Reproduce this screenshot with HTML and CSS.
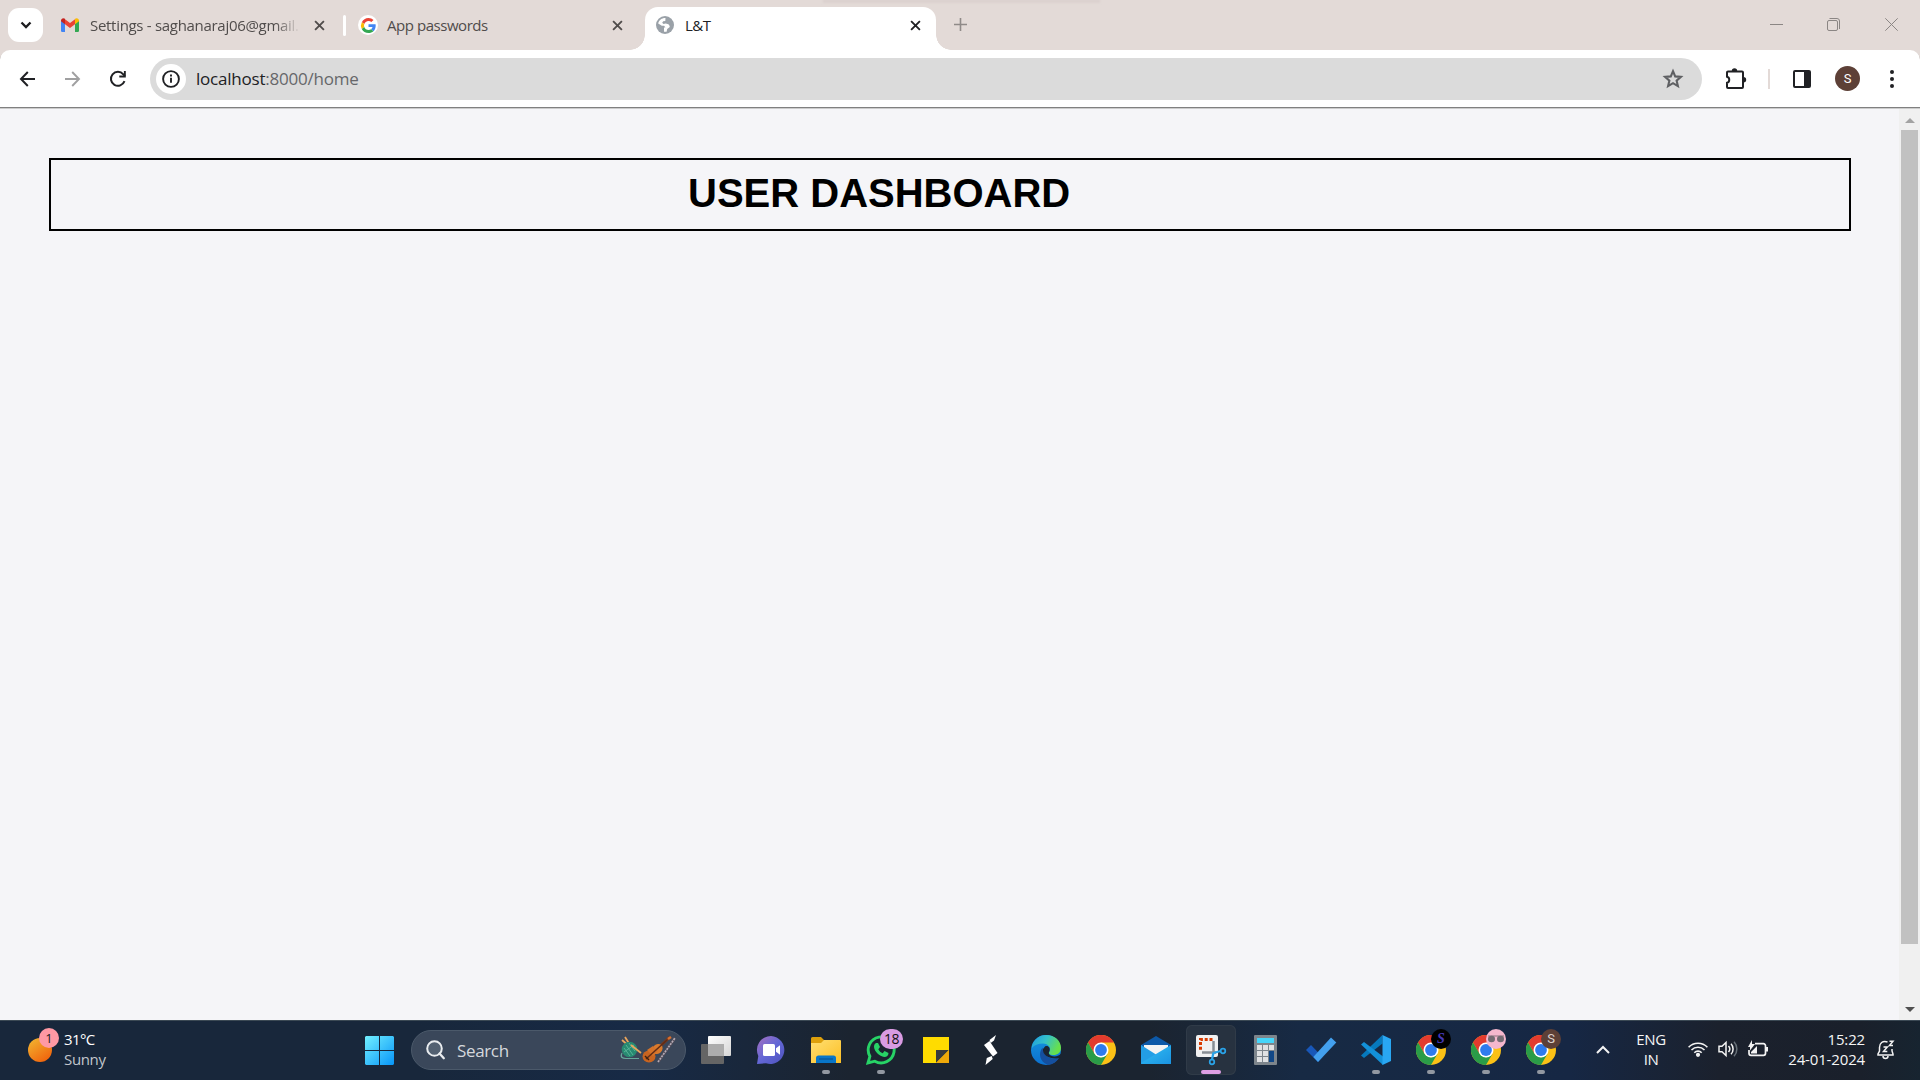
FILE: index.html
```html
<!DOCTYPE html>
<html lang="en">
<head>
<meta charset="utf-8">
<title>L&amp;T</title>
<link rel="stylesheet" href="styles.css">
</head>
<body>
<svg class="defs" width="0" height="0" aria-hidden="true">
  <defs>
    <symbol id="chrome" viewBox="0 0 30 30">
      <circle cx="15" cy="15" r="15" fill="#fbc116"/>
      <path d="M2 7.5A15 15 0 0 1 28 7.5H15L8.5 18.700z" fill="#e33b2e"/>
      <path d="M2 7.500A15 15 0 0 0 15 30L21.500 18.750 15 22.500 8.500 18.750z" fill="#2a9c48"/>
      <circle cx="15" cy="15" r="7.500" fill="#fff"/>
      <circle cx="15" cy="15" r="5.900" fill="#2f7bed"/>
    </symbol>
    <symbol id="x" viewBox="0 0 10 10"><path d="M1 1l8 8M9 1L1 9" fill="none" stroke="currentColor" stroke-width="1.700"/></symbol>
    <linearGradient id="win" x2="1" y2="1"><stop stop-color="#72f0ff"/><stop offset="1" stop-color="#0795f8"/></linearGradient>
    <linearGradient id="sun" x2=".7" y2="1"><stop stop-color="#f2b932"/><stop offset="1" stop-color="#f0640d"/></linearGradient>
    <linearGradient id="tv" x2="1" y2="1"><stop stop-color="#fff"/><stop offset="1" stop-color="#d6d6d6"/></linearGradient>
    <linearGradient id="chat" x2="1" y2="1"><stop stop-color="#a770c0"/><stop offset=".5" stop-color="#6367d6"/><stop offset="1" stop-color="#4d52bd"/></linearGradient>
    <linearGradient id="folder" x2="1" y2="1"><stop stop-color="#ffdf72"/><stop offset="1" stop-color="#fcbf25"/></linearGradient>
    <linearGradient id="edge1" x2="1" y2=".4"><stop stop-color="#1d9be3"/><stop offset=".5" stop-color="#35c1c9"/><stop offset="1" stop-color="#67e04c"/></linearGradient>
    <linearGradient id="edge2" x2="0" y2="1"><stop stop-color="#1595df"/><stop offset="1" stop-color="#0c70cf"/></linearGradient>
    <linearGradient id="mail" x2="1" y2="1"><stop stop-color="#32c1f4"/><stop offset="1" stop-color="#1b93e2"/></linearGradient>
  </defs>
</svg>

<header class="tabstrip">
  <button class="tab-search"><svg width="12" height="8" viewBox="0 0 12 8"><path d="M1.500 1.500L6 6l4.500-4.500" fill="none" stroke="#1d1d1f" stroke-width="2.300"/></svg></button>
  <div class="tab tab-mail">
    <svg width="18" height="14" viewBox="0 0 18 14"><path d="M0 2.500l4 3V14H1.200A1.200 1.200 0 0 1 0 12.800z" fill="#4285f4"/><path d="M14 5.500l4-3v10.300a1.200 1.200 0 0 1-1.200 1.200H14z" fill="#34a853"/><path d="M4 1.300l5 3.700 5-3.700v4.900L9 10 4 6.200z" fill="#ea4335"/><path d="M0 2.500C0 .3 2.400-.6 4 .8v5.400L0 3.200z" fill="#c5221f"/><path d="M18 2.500C18 .3 15.600-.6 14 .8v5.400l4-3z" fill="#fbbc04"/></svg>
    <span class="tab-title">Settings - saghanaraj06@gmail.</span>
    <svg class="tab-close" width="11" height="11"><use href="#x"/></svg>
  </div>
  <div class="tab-divider"></div>
  <div class="tab tab-google">
    <span class="google-badge"><svg width="15" height="15" viewBox="0 0 48 48"><path fill="#ea4335" d="M24 9.500c3.500 0 6.700 1.200 9.200 3.600l6.900-6.900C35.900 2.400 30.500 0 24 0 14.600 0 6.500 5.400 2.600 13.200l8 6.200C12.400 13.700 17.700 9.500 24 9.500z"/><path fill="#4285f4" d="M47 24.600c0-1.600-.2-3.100-.4-4.600H24v9h12.900c-.6 3-2.300 5.500-4.800 7.200l7.700 6C44.400 38 47 31.800 47 24.600z"/><path fill="#fbbc05" d="M10.500 28.600a14 14 0 0 1 0-9.200l-8-6.200a24 24 0 0 0 0 21.600z"/><path fill="#34a853" d="M24 48c6.500 0 11.900-2.100 15.900-5.800l-7.700-6c-2.200 1.500-4.900 2.300-8.200 2.300-6.300 0-11.600-4.200-13.500-9.900l-8 6.200C6.500 42.600 14.600 48 24 48z"/></svg></span>
    <span class="tab-title">App passwords</span>
    <svg class="tab-close" width="11" height="11"><use href="#x"/></svg>
  </div>
  <div class="tab tab-active">
    <svg width="18" height="18" viewBox="0 0 18 18"><circle cx="9" cy="9" r="9" fill="#9aa1a8"/><path d="M9.500 2.100C5.800 2 3 4.200 2.200 7.500l3.600 2.300h2.300l1.300 1.700H8v4.200c.8.200 1.800.2 2.600 0l.6-2.600 2.600-2.200c-.2-1.500-1-2.500-2.300-2.800L9.800 7.600 7.500 7.900 6.200 6.800l1-1.600 2.100-.3z" fill="#fff"/><path d="M2.300 10.700l3.600 2-.5 1.900A7.200 7.200 0 0 1 2.300 10.700z" fill="#9aa1a8"/></svg>
    <span class="tab-title">L&amp;T</span>
    <svg class="tab-close" width="11" height="11"><use href="#x"/></svg>
  </div>
  <svg class="new-tab" width="13" height="13" viewBox="0 0 13 13"><path d="M6.500 0v13M0 6.500h13" stroke="#8f8a88" stroke-width="1.600"/></svg>
  <div class="window-buttons">
    <svg width="13" height="13" viewBox="0 0 13 13"><path d="M0 6.500h13" stroke="#8b8684"/></svg>
    <svg width="13" height="13" viewBox="0 0 13 13" fill="none" stroke="#8b8684"><rect x=".5" y="2.500" width="10" height="10" rx="1.500"/><path d="M2.500.5H10A2.500 2.500 0 0 1 12.500 3v8"/></svg>
    <svg width="13" height="13" viewBox="0 0 13 13"><path d="M.3.300l12.400 12.400M12.700.3L.3 12.700" stroke="#8b8684"/></svg>
  </div>
  <div class="top-shadow"></div>
</header>

<nav class="toolbar">
  <svg width="16" height="16" viewBox="0 0 16 16" fill="none" stroke="#202124" stroke-width="2"><path d="M15 8H1.500M7.800 1L1 8l6.800 7"/></svg>
  <svg width="16" height="16" viewBox="0 0 16 16" fill="none" stroke="#a0a0a1" stroke-width="1.900"><path d="M0 8h14M7.200 1L14 8l-6.800 7"/></svg>
  <svg width="16" height="16" viewBox="0 0 16 16"><path d="M14.500 10.200A7 7 0 1 1 13.300 3.300L15 5" fill="none" stroke="#202124" stroke-width="2"/><path d="M15.800 0v6.500H9.300V4.600h4.600V0z" fill="#202124"/></svg>
  <div class="omnibox">
    <span class="site-info"><svg width="18" height="18" viewBox="0 0 18 18"><circle cx="9" cy="9" r="7.900" fill="none" stroke="#202124" stroke-width="1.900"/><path d="M9 7.800v5M9 4.600v2" stroke="#202124" stroke-width="1.900"/></svg></span>
    <span class="url"><b>localhost</b>:8000/home</span>
    <svg class="star" width="20" height="19" viewBox="0 0 20 19"><path d="M10 2.200l2.200 5.200 5.700.5-4.300 3.700 1.300 5.500L10 14.200l-4.900 2.900 1.300-5.500L2.100 7.900l5.700-.5z" fill="none" stroke="#5f6063" stroke-width="2.100"/></svg>
  </div>
  <svg class="puzzle" width="22" height="22" viewBox="0 0 22 22"><path d="M3 3.500h14a1 1 0 0 1 1 1V19a1 1 0 0 1-1 1H3a1 1 0 0 1-1-1v-4.200c3-.5 3-5.600 0-6.100V4.500a1 1 0 0 1 1-1z" fill="none" stroke="#202124" stroke-width="2"/><path d="M6.800 3a2.700 2.700 0 0 1 5.400 0zM18.500 9a2.700 2.700 0 0 1 0 5.400z" fill="#202124"/></svg>
  <div class="toolbar-divider"></div>
  <svg class="panel" width="18" height="18" viewBox="0 0 18 18"><rect x="1" y="1" width="16" height="16" rx="1" fill="none" stroke="#202124" stroke-width="2"/><path d="M11 1h6v16h-6z" fill="#202124"/></svg>
  <span class="avatar">S</span>
  <svg class="menu" width="4" height="18" viewBox="0 0 4 18" fill="#202124"><circle cx="2" cy="2" r="2"/><circle cx="2" cy="9" r="2"/><circle cx="2" cy="16" r="2"/></svg>
</nav>

<div class="viewport">
  <main class="page"><h1 class="banner">USER DASHBOARD</h1></main>
  <div class="scrollbar">
    <svg width="10" height="5" viewBox="0 0 10 5"><path d="M0 5l5-5 5 5z" fill="#a3a3a3"/></svg>
    <div class="thumb"></div>
    <svg class="down" width="10" height="5" viewBox="0 0 10 5"><path d="M0 0l5 5 5-5z" fill="#505050"/></svg>
  </div>
</div>

<footer class="taskbar">
  <div class="weather">
    <span class="sun"><svg width="24" height="24" viewBox="0 0 24 24"><circle cx="12" cy="12" r="12" fill="url(#sun)"/></svg><span class="sun-badge">1</span></span>
    <div class="weather-text"><span>31°C</span><span class="muted">Sunny</span></div>
  </div>
  <svg class="start" width="29" height="29" viewBox="0 0 29 29"><path d="M1 0h13v14H0V1zM15 0h13l1 1v13H15zM0 15h14v14H1l-1-1zM15 15h14v13l-1 1H15z" fill="url(#win)"/></svg>
  <div class="search">
    <svg width="19" height="20" viewBox="0 0 19 20" fill="none" stroke="#e9ecef"><circle cx="8.500" cy="8.500" r="7.300" stroke-width="2" fill="#526071"/><path d="M13.500 13.500l4.300 4.700" stroke-width="2.300" stroke-linecap="round"/></svg>
    <span>Search</span>
    <svg class="art" width="56" height="28" viewBox="0 0 56 28"><path d="M4 1l5 8M1 4l8 7" stroke="#e9a55c" stroke-width="1.800"/><path d="M1 17c-2 4 0 5.500 4 5.500h13" fill="none" stroke="#67a89b" stroke-width="1.200"/><circle cx="8.500" cy="13.500" r="7.800" fill="#288a71"/><path d="M3 12l6 8M5 9l7 10M8 7l6 8M3 16l10-7" stroke="#5cb79c" stroke-width=".9"/><path d="M10 9l10 8" stroke="#e9a55c" stroke-width="1.800"/><path d="M35 14L49 1" stroke="#7b3a1c" stroke-width="2.600"/><path d="M47 3l3-2" stroke="#d7702f" stroke-width="2.500"/><ellipse cx="36.500" cy="13" rx="5.500" ry="4.700" transform="rotate(-45 36.500 13)" fill="#d97a2c"/><ellipse cx="28" cy="20.500" rx="6.500" ry="6" fill="#c86420"/><path d="M26 14l6 6 5-5-5-5z" fill="#d5732a"/><path d="M25 23L46 4" stroke="#5f2c17" stroke-width="1.500"/><path d="M24 20l4 4" stroke="#41200f" stroke-width="1.500"/><path d="M37 26L54 2" stroke="#554e59" stroke-width="3"/><path d="M37 26L54 2" stroke="#b5adb8" stroke-width="1.600" stroke-dasharray="2 1"/></svg>
  </div>
  <div class="apps">
    <div class="app"><svg width="30" height="30" viewBox="0 0 30 30"><rect x="7" y="1" width="23" height="20" rx="1" fill="url(#tv)"/><rect y="9" width="23" height="20" rx="1" fill="#656565"/><path d="M7 9h16v12H7z" fill="#adadad"/></svg></div>
    <div class="app"><svg width="30" height="30" viewBox="0 0 30 30"><path d="M15 1a14 14 0 1 1-5 27.300L1 29l1.300-8A14 14 0 0 1 15 1z" fill="url(#chat)"/><rect x="7" y="9" width="12" height="12" rx="1.500" fill="#fff"/><path d="M20 13.300l4-3v9.400l-4-3z" fill="#fff"/></svg></div>
    <div class="app running"><svg width="30" height="30" viewBox="0 0 30 30"><path d="M0 3.500A1.500 1.500 0 0 1 1.500 2H10l3 3v4H0z" fill="#dda00c"/><path d="M0 8h10l3-3h16a1 1 0 0 1 1 1v22H0z" fill="url(#folder)"/><path d="M5 28v-5a2.500 2.500 0 0 1 2.500-2.500h15A2.500 2.500 0 0 1 25 23v5z" fill="#0876c9"/><path d="M8 24h14" stroke="#064d8c"/></svg></div>
    <div class="app running"><svg width="30" height="30" viewBox="0 0 30 30"><path d="M2 28l1.900-6.700A13 13 0 1 1 8.800 26.200z" fill="none" stroke="#27d366" stroke-width="2.900"/><path d="M10 8h2l2 4-1.700 2.200c1 2 2.300 3.200 4.400 4L18.500 16l4 2c0 3-2 4-4.300 3.900C13.500 21.500 8.500 16.500 8 12c0-2 .7-3.200 2-4z" fill="#27d366"/></svg><span class="badge count">18</span></div>
    <div class="app"><svg width="30" height="30" viewBox="0 0 30 30"><path d="M2 2h26v26H2z" fill="#ffdc00"/><path d="M15 28V15h13z" fill="#383b3c"/><path d="M15 28l13-13v13z" fill="#efa90a"/></svg></div>
    <div class="app"><svg width="30" height="30" viewBox="0 0 30 30" fill="#fff"><path d="M8 10l5.500-4L21.500 18l-4.500 3.500z"/><path d="M20 0l-6.500 5 1.200 3L18 5.500zM9.500 30l7.200-6-1-3-4.900 2z"/></svg></div>
    <div class="app"><svg width="30" height="30" viewBox="0 0 30 30"><circle cx="15" cy="15" r="15" fill="url(#edge2)"/><path d="M1 11C3 4 8.500 0 15 0c9 0 15 6 15 12.700C30 17.500 26.500 20 22.500 20c-4 0-5.200-1.700-4.200-3 2.500-4-1-8.500-6.300-8.500C7 8.500 3 10 1 13z" fill="url(#edge1)"/><path d="M11.500 12.500C7 18 8.500 27 17 29.800c5-.1 8.500-3 10.800-6.800-7 2.500-15-1-16.300-10.500z" fill="#154f9e"/><path d="M14 11.500c3-1.500 5.700 1.500 4.500 4.500-1.700 2.300-.2 5.200 5 5.400 2.500 0 4.500-1 6.500-2.700v4l-2.200.3C21 25 11 21 12 14z" fill="#1b2430"/></svg></div>
    <div class="app"><svg width="30" height="30"><use href="#chrome"/></svg></div>
    <div class="app"><svg width="30" height="30" viewBox="0 0 30 30"><path d="M0 10L15 1l15 9v10H0z" fill="#0d59a8"/><path d="M3 10h24v10H3z" fill="#f3f3f3"/><path d="M0 10l30 19H0z" fill="#239ee6"/><path d="M30 10v19H2l-2-1z" fill="url(#mail)"/></svg></div>
    <div class="app active"><svg width="30" height="30" viewBox="0 0 30 30"><rect width="22" height="22" rx="2" fill="#f1f1f1"/><path d="M16.500 4.500h-12v12" fill="none" stroke="#d83b01" stroke-width="3" stroke-dasharray="3 1.800"/><path d="M17.500 6v12M6 17.500h14" stroke="#898e94" stroke-width="2.500"/><path d="M17.500 17.500l-1.500 7M17.500 18l7-2" stroke="#2aa3e8" stroke-width="2.300"/><circle cx="16" cy="27" r="2.300" fill="none" stroke="#2aa3e8" stroke-width="1.700"/><circle cx="27" cy="16" r="2.300" fill="none" stroke="#2aa3e8" stroke-width="1.700"/></svg></div>
    <div class="app"><svg width="30" height="30" viewBox="0 0 30 30"><rect x="3" width="23" height="30" rx="1" fill="#7d858c"/><path d="M6 3h17v5H6z" fill="#45d5fa"/><path d="M6 10h5v5H6zM12 10h5v5h-5zM18 10h5v5h-5zM6 16h5v5H6zM12 16h5v5h-5zM6 22h5v5H6zM12 22h5v5h-5z" fill="#e0e1e3"/><path d="M18 16h5v11h-5z" fill="#114786"/></svg></div>
    <div class="app"><svg width="30" height="30" viewBox="0 0 30 30"><path d="M0 15l5-5 11.500 12L12 27z" fill="#1857b8"/><path d="M7.300 22L25 2.500l5.300 5L12 27z" fill="#43a0ee"/></svg></div>
    <div class="app running"><svg width="30" height="30" viewBox="0 0 30 30"><path d="M0 20.500L21.500 0v8.500L3 23z" fill="#0679bd"/><path d="M0 9.500l3-2.500 19 14.500V30z" fill="#1391d9"/><path d="M21.500 0L30 4v22l-8.500 4z" fill="#29a7f3"/></svg></div>
    <div class="app running"><svg width="30" height="30"><use href="#chrome"/></svg><span class="badge profile-ink">S</span></div>
    <div class="app running"><svg width="30" height="30"><use href="#chrome"/></svg><span class="badge profile-pink"><svg width="20" height="20" viewBox="0 0 20 20"><path d="M2 7h16" stroke="#ad8997" stroke-width="1.500"/><ellipse cx="5.500" cy="10" rx="3.500" ry="3.200" fill="#746b73"/><ellipse cx="14.500" cy="10" rx="3.500" ry="3.200" fill="#746b73"/></svg></span></div>
    <div class="app running"><svg width="30" height="30"><use href="#chrome"/></svg><span class="badge profile-brown">S</span></div>
  </div>
  <div class="tray">
    <svg class="chevron" width="14" height="8" viewBox="0 0 14 8"><path d="M1 7l6-6 6 6" fill="none" stroke="#f3f3f3" stroke-width="2"/></svg>
    <div class="language"><span>ENG</span><span>IN</span></div>
    <div class="status">
      <svg width="20" height="16" viewBox="0 0 20 16" fill="none" stroke="#f3f3f3" stroke-width="1.600"><path d="M.6 6.200a13 13 0 0 1 18.800 0M3.500 9a9.200 9.200 0 0 1 13 0M6.300 11.700a5.200 5.200 0 0 1 7.400 0"/><circle cx="10" cy="13.800" r="1.300" fill="#f3f3f3"/></svg>
      <svg width="20" height="16" viewBox="0 0 20 16" fill="none" stroke="#f3f3f3" stroke-width="1.500"><path d="M1 5.200h3L8 1.500v13l-4-3.700H1z"/><path d="M10.500 5a4.500 4.500 0 0 1 0 6M13 2.800a7.500 7.500 0 0 1 0 10.400"/><path d="M16 .8a10.500 10.500 0 0 1 0 14.400" stroke="#677078"/></svg>
      <svg width="20" height="16" viewBox="0 0 20 16"><path d="M7 2.700h8.500a2 2 0 0 1 2 2v7.600a2 2 0 0 1-2 2H3a2 2 0 0 1-2-2V9" fill="none" stroke="#f3f3f3" stroke-width="1.700"/><path d="M18 6h2v4.500h-2zM3 12.500V11l6-6v7.500zM4-1v4h3L2 9.500V6H0z" fill="#f3f3f3"/></svg>
    </div>
    <div class="clock"><span>15:22</span><span>24-01-2024</span></div>
    <svg class="bell" width="18" height="19" viewBox="0 0 18 19" fill="none" stroke="#f3f3f3" stroke-width="1.500"><path d="M10.500 2C5.500.500 2.500 3 2.500 7.500V11L1 14v1h15v-1l-1-3V9M6 16a2.500 2.500 0 0 0 5 0"/><path d="M6.500 7h3.800l-3.800 4.500h3.800M12.500 1.200H16l-3.500 4.300H16"/></svg>
  </div>
</footer>
</body>
</html>
```
FILE: styles.css
```css
* { box-sizing: border-box; }
body {
  margin: 0;
  width: 1920px;
  height: 1080px;
  overflow: hidden;
  display: flex;
  flex-direction: column;
  background: #e3dad7;
  font-family: "Open Sans", "Noto Sans", sans-serif;
}
svg { display: block; flex: none; overflow: visible; }
.defs { position: absolute; }

/* Tab strip */
.tabstrip { height: 50px; flex: none; display: flex; position: relative; background: #e3dad7; }
.tab-search {
  width: 35px; height: 34px; margin: 8px 0 0 8px; padding: 0;
  border: 0; border-radius: 11px; background: #fff;
  display: flex; align-items: center; justify-content: center;
}
.tab { display: flex; align-items: center; height: 50px; color: #504c4b; }
.tab-title { font-size: 15px; line-height: 20px; white-space: nowrap; }
.tab-close { margin-left: auto; }
.tab-mail { width: 264px; margin-left: 18px; }
.tab-mail .tab-title {
  width: 210px; margin-left: 11px; overflow: hidden; letter-spacing: -.3px;
  -webkit-mask-image: linear-gradient(90deg, #000 185px, transparent 210px);
  mask-image: linear-gradient(90deg, #000 185px, transparent 210px);
}
.tab-divider { width: 3px; height: 21px; margin: 15px 0 0 18px; border-radius: 2px; background: #fff; }
.tab-google { width: 265px; margin-left: 12px; }
.tab-google .tab-title { margin-left: 9px; letter-spacing: -.45px; }
.google-badge { width: 20px; height: 20px; border-radius: 50%; background: #fff; display: grid; place-items: center; }
.tab-active {
  position: relative; width: 291px; height: 43px; margin: 7px 0 0 22px;
  padding: 0 15px 7px 11px; border-radius: 13px 13px 0 0; background: #fff; color: #202124;
}
.tab-active .tab-title { margin-left: 11px; letter-spacing: -.5px; }
.tab-active::before, .tab-active::after { content: ""; position: absolute; bottom: 0; width: 15px; height: 15px; }
.tab-active::before { left: -15px; background: radial-gradient(circle at 0 0, transparent 14.5px, #fff 15px); }
.tab-active::after { right: -15px; background: radial-gradient(circle at 100% 0, transparent 14.5px, #fff 15px); }
.new-tab { margin: 18px 0 0 18px; }
.window-buttons { display: flex; gap: 44px; margin: 18px 22px 0 auto; }
.window-buttons svg:nth-child(2) { margin-right: 1px; }
.top-shadow { position: absolute; left: 823px; top: 0; width: 277px; height: 3px; background: linear-gradient(#d3c9c7, #e0d6d3); filter: blur(1px); }

/* Toolbar */
.toolbar {
  height: 59px; flex: none; display: flex; align-items: center;
  padding: 0 26px 1px 20px; background: #fff; border-radius: 10px 10px 0 0;
  border-bottom: 1px solid #ccc; box-shadow: inset 0 -1px #808080;
}
.toolbar > svg:nth-child(2) { margin-left: 29px; }
.toolbar > svg:nth-child(3) { margin-left: 29px; }
.omnibox { width: 1552px; height: 42px; margin-left: 24px; padding: 0 19px 0 6px; border-radius: 21px; background: #dbdbdb; display: flex; align-items: center; }
.site-info { width: 30px; height: 30px; border-radius: 50%; background: #fff; display: grid; place-items: center; }
.url { margin-left: 10px; padding-top: 1px; font-size: 17px; line-height: 24px; color: #66676a; letter-spacing: -.22px; }
.url b { font-weight: 400; color: #202124; }
.star { margin-left: auto; }
.toolbar .puzzle { margin-left: 23px; }
.toolbar-divider { width: 2px; height: 20px; margin-left: 21px; background: #e3dad7; }
.panel { margin-left: 23px; }
.avatar { width: 25px; height: 25px; margin-left: 24px; border-radius: 50%; background: #5d4037; color: #fff; font: 13px/25px Roboto, sans-serif; text-align: center; }
.menu { margin-left: auto; }

/* Page */
.viewport { flex: 1; display: flex; background: #f5f5f8; }
.page { flex: 1; padding: 49px 48px 0 49px; }
.banner {
  margin: 0; height: 73px; padding-left: 637px; border: 2px solid #000;
  font: bold 40px/67px "Liberation Sans", Arial, sans-serif; color: #000;
}
.scrollbar { width: 21px; padding: 9px 0 8px; background: #f0f0f0; display: flex; flex-direction: column; align-items: center; }
.thumb { width: 17px; height: 814px; margin-top: 7px; background: #c1c1c1; }
.scrollbar .down { margin-top: auto; }

/* Taskbar */
.taskbar {
  height: 60px; flex: none; display: flex; align-items: center; padding-bottom: 1px; border-top: 1px solid #3b4954;
  background: linear-gradient(90deg, #18273b 0, #18273b 420px, #172a46 640px, #1b2430 850px, #1b2430 1150px, #172a44 1300px, #162744 1570px, #1b212d 1720px, #1a202b 1860px, #172430 1920px);
  color: #fff;
}
.weather { display: flex; width: 337px; margin-left: 28px; align-items: center; }
.sun { position: relative; }
.sun-badge { position: absolute; left: 11px; top: -10px; width: 20px; height: 20px; border-radius: 50%; background: #ff99a4; color: #1d1d1d; font-size: 13px; line-height: 20px; text-align: center; }
.weather-text { margin-left: 12px; padding-bottom: 3px; display: flex; flex-direction: column; font-size: 15px; line-height: 20px; letter-spacing: -.6px; }
.muted { color: #c2c6cc; letter-spacing: -.35px; }
.search { width: 275px; height: 40px; margin-left: 17px; padding: 0 8px 0 14px; border: 1px solid #4b596a; border-radius: 20px; background: #3a475a; color: #d5d8dd; display: flex; align-items: center; font-size: 17px; letter-spacing: -.35px; }
.search span { margin-left: 12px; }
.art { margin-left: auto; }
.apps { display: flex; gap: 5px; margin-left: 5px; }
.app { position: relative; width: 50px; height: 50px; display: grid; place-items: center; }
.app.active { border-radius: 6px; background: #273240; box-shadow: inset 0 0 0 1px #303b48; }
.running::after, .active::after { content: ""; position: absolute; left: 21px; bottom: 1px; width: 8px; height: 4px; border-radius: 2px; background: #9298a1; }
.active::after { left: 15px; width: 20px; background: #dd9fe5; }
.badge { position: absolute; left: 25px; top: 4px; width: 20px; height: 20px; border-radius: 50%; display: grid; place-items: center; font: 13px/20px Roboto, sans-serif; }
.count { left: 24px; width: 23px; border-radius: 10px; background: #d99be2; color: #111; font: 14px/20px "Open Sans", sans-serif; letter-spacing: -.4px; }
.profile-ink { background: #000; color: #4539b8; font: italic bold 14px/20px "Liberation Serif", serif; }
.profile-pink { background: #f5b7cd; }
.profile-brown { background: #5d4037; color: #ddd3cf; }
.tray { display: flex; flex: 1; align-items: center; justify-content: flex-end; padding-right: 25px; font-size: 15px; line-height: 20px; color: #f5f5f5; }
.language, .clock { display: flex; flex-direction: column; padding-bottom: 3px; letter-spacing: -.4px; }
.language { width: 40px; margin: 0 17px 0 21px; align-items: center; }
.status { display: flex; gap: 10px; padding-bottom: 2px; }
.clock { width: 97px; align-items: flex-end; letter-spacing: -.15px; }
.bell { margin-left: 12px; margin-bottom: 2px; }
```
